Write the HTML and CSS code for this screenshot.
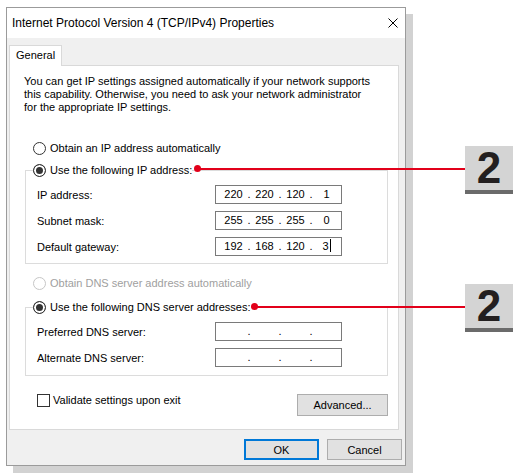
FILE: index.html
```html
<!DOCTYPE html>
<html lang="en">
<head>
  <meta charset="UTF-8" />
  <meta name="viewport" content="width=device-width, initial-scale=1.0"/>
  <title>Internet Protocol Version 4 (TCP/IPv4) Properties</title>
  <link rel="stylesheet" href="styles.css">
</head>
<body>

  <div class="page">
    <div class="window">
      <div class="titlebar">
        <span>Internet Protocol Version 4 (TCP/IPv4) Properties</span>
        <svg class="close" width="10" height="10" viewBox="0 0 10 10">
          <path d="M0.5 0.5 L9.5 9.5 M9.5 0.5 L0.5 9.5" stroke="#000" stroke-width="1" fill="none"/>
        </svg>
      </div>

      <div class="client">
        <div class="tabs">
          <div class="tab">General</div>
        </div>

        <div class="panel">
          <p class="intro">You can get IP settings assigned automatically if your network supports<br>this capability. Otherwise, you need to ask your network administrator<br>for the appropriate IP settings.</p>

          <div class="radio option-ip"><span class="mark"></span>Obtain an IP address automatically</div>

          <fieldset class="group">
            <legend class="radio"><span class="mark on"></span>Use the following IP address:</legend>
            <div class="field">
              <span class="label">IP address:</span>
              <div class="ip"><span>220</span><i>.</i><span>220</span><i>.</i><span>120</span><i>.</i><span>1</span></div>
            </div>
            <div class="field">
              <span class="label">Subnet mask:</span>
              <div class="ip"><span>255</span><i>.</i><span>255</span><i>.</i><span>255</span><i>.</i><span>0</span></div>
            </div>
            <div class="field">
              <span class="label">Default gateway:</span>
              <div class="ip"><span>192</span><i>.</i><span>168</span><i>.</i><span>120</span><i>.</i><span>3<b class="caret"></b></span></div>
            </div>
          </fieldset>

          <div class="radio option-dns disabled"><span class="mark"></span>Obtain DNS server address automatically</div>

          <fieldset class="group group-dns">
            <legend class="radio"><span class="mark on"></span>Use the following DNS server addresses:</legend>
            <div class="field">
              <span class="label">Preferred DNS server:</span>
              <div class="ip"><span></span><i>.</i><span></span><i>.</i><span></span><i>.</i><span></span></div>
            </div>
            <div class="field">
              <span class="label">Alternate DNS server:</span>
              <div class="ip"><span></span><i>.</i><span></span><i>.</i><span></span><i>.</i><span></span></div>
            </div>
          </fieldset>

          <div class="footer">
            <div class="check"><span class="box"></span>Validate settings upon exit</div>
            <button class="btn advanced">Advanced...</button>
          </div>
        </div>

        <div class="actions">
          <button class="btn default">OK</button>
          <button class="btn">Cancel</button>
        </div>
      </div>
    </div>

    <div class="callout callout-ip">
      <span class="pin"></span><span class="lead"></span><span class="badge">2</span>
    </div>
    <div class="callout callout-dns">
      <span class="pin"></span><span class="lead"></span><span class="badge">2</span>
    </div>
  </div>

</body>
</html>
```

FILE: styles.css
```css
body {
  margin: 0;
  background: #fff;
  font-family: "Liberation Sans", Arial, sans-serif;
  font-size: 11px;
  color: #000;
}

.page {
  position: relative;
  box-sizing: border-box;
  width: 514px;
  height: 473px;
  padding: 7px 0 0 6px;
  overflow: hidden;
}

.window {
  box-sizing: border-box;
  width: 400px;
  height: 459px;
  border: 1px solid #9b9b9b;
  background: #f0f0f0;
  box-shadow: 7px 7px 0 #d2d2d2;
  display: flex;
  flex-direction: column;
}

.titlebar {
  height: 30px;
  flex: none;
  background: #fff;
  display: flex;
  align-items: center;
  justify-content: space-between;
  padding: 0 7px 0 5px;
  font-size: 12px;
}

.client {
  flex: 1;
  padding: 7px 3px 0 2px;
}

.tabs {
  display: flex;
  height: 20px;
}

.tab {
  position: relative;
  z-index: 1;
  box-sizing: border-box;
  height: 21px;
  padding: 0 6px;
  border: 1px solid #d9d9d9;
  border-bottom: none;
  background: #fff;
  line-height: 19px;
}

.panel {
  box-sizing: border-box;
  width: 390px;
  height: 365px;
  border: 1px solid #d9d9d9;
  background: #fff;
}

.intro {
  margin: 9px 0 0 14px;
  line-height: 13px;
}

.radio {
  display: flex;
  align-items: center;
  gap: 4px;
  height: 14px;
  line-height: 14px;
}

.option-ip {
  margin: 27px 0 0 23px;
}

.option-dns {
  margin: 12px 0 0 23px;
}

.mark {
  flex: none;
  box-sizing: border-box;
  width: 13px;
  height: 13px;
  border: 1px solid #333;
  border-radius: 50%;
  background: #fff;
}

.mark.on {
  background: #333;
  box-shadow: inset 0 0 0 2px #fff;
}

.disabled {
  color: #a0a0a0;
}

.disabled .mark {
  border-color: #c6c6c6;
}

.group {
  box-sizing: border-box;
  width: 363px;
  min-width: 0;
  margin: 8px 0 0 15px;
  padding: 8px 0 7px 7px;
  border: 1px solid #dcdcdc;
}

.group-dns {
  margin-top: 10px;
  padding-bottom: 8px;
}

.group legend {
  padding: 0;
}

.field {
  display: flex;
  align-items: center;
  height: 19px;
  margin-left: 4px;
}

.field + .field {
  margin-top: 7px;
}

.field .label {
  width: 178px;
}

.ip {
  box-sizing: border-box;
  width: 127px;
  height: 19px;
  border: 1px solid #7a7a7a;
  padding-left: 4px;
  display: grid;
  grid-template-columns: 27px 4px 27px 4px 27px 4px 27px;
  align-items: center;
  text-align: center;
  line-height: 17px;
}

.ip i {
  font-style: normal;
}

.caret {
  display: inline-block;
  width: 1px;
  height: 13px;
  margin-left: 1px;
  background: #000;
  vertical-align: -2px;
}

.footer {
  display: flex;
  justify-content: space-between;
  align-items: flex-start;
  margin: 17px 10px 0 27px;
}

.check {
  display: flex;
  align-items: center;
  gap: 3px;
  height: 14px;
}

.box {
  box-sizing: border-box;
  width: 13px;
  height: 13px;
  border: 1px solid #333;
  background: #fff;
}

.btn {
  box-sizing: border-box;
  padding: 0;
  font-family: inherit;
  font-size: 11px;
  color: #000;
  background: #e1e1e1;
  border: 1px solid #adadad;
}

.advanced {
  width: 91px;
  height: 22px;
  margin-top: 1px;
}

.actions {
  display: flex;
  justify-content: flex-end;
  gap: 8px;
  margin-top: 9px;
}

.actions .btn {
  width: 75px;
  height: 21px;
}

.btn.default {
  border-color: #0078d7;
  box-shadow: inset 0 0 0 1px #0078d7;
}

/* annotation callouts */
.callout {
  position: absolute;
  right: 1px;
  display: flex;
  align-items: flex-start;
}

.callout-ip {
  left: 194px;
  top: 146px;
}

.callout-dns {
  left: 251px;
  top: 284px;
}

.pin {
  flex: none;
  width: 7px;
  height: 7px;
  margin-top: 19px;
  border-radius: 50%;
  background: #e2001a;
}

.lead {
  flex: 1;
  height: 2px;
  margin: 22px 0 0 -2px;
  background: #e2001a;
}

.badge {
  flex: none;
  width: 48px;
  height: 44px;
  border-bottom: 4px solid #6b6b6b;
  background: #d4d4d4;
  color: #231f20;
  font: bold 44px/44px "Liberation Sans", Arial, sans-serif;
  text-align: center;
}
```
